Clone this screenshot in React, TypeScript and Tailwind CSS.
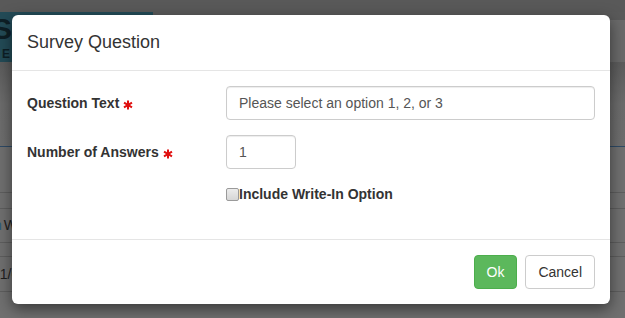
const RequiredMark = () => (
  <svg width="10" height="10" viewBox="0 0 10 10" className="ml-[4px] mt-[4px] shrink-0">
    <g stroke="#e01010" strokeWidth="2" strokeLinecap="butt">
      <line x1="5" y1="0.5" x2="5" y2="9.5" />
      <line x1="1" y1="2.7" x2="9" y2="7.3" />
      <line x1="1" y1="7.3" x2="9" y2="2.7" />
    </g>
  </svg>
);

const inputClass =
  'h-[34px] rounded-[4px] border border-[#cccccc] bg-white px-[12px] text-[14px] text-[#555555] shadow-[inset_0_1px_1px_rgba(0,0,0,0.075)] outline-none';

const App = () => {
  return (
    <div className="relative h-[318px] w-[625px] overflow-hidden bg-[#707070] font-['Liberation_Sans',Arial,sans-serif]">
      {/* page behind the dialog */}
      <div className="flex flex-col">
        <div className="h-[12px] bg-[#595959]" />
        <div className="flex h-[50px]">
          <div className="flex w-[153px] flex-col bg-[#234b57] pl-[0px] text-[#0e1f26]">
            <span className="ml-[-8px] mt-[2px] text-[30px] font-black leading-none">S</span>
            <span className="ml-[2px] mt-[4px] text-[12px] font-bold leading-none">E</span>
          </div>
          <div className="flex flex-1 flex-col">
            <div className="h-[8px] bg-[#5a5a5a]" />
            <div className="flex-1 bg-[#6a6a6a]" />
          </div>
        </div>
        <div className="h-[84px] bg-gradient-to-b from-[#5c5c5c] via-[#6c6c6c] to-[#6e6e6e]" />
        <div className="h-px bg-[#2e4a66]" />
        <div className="h-[46px] border-b border-[#5e5e5e]" />
        <div className="h-[16px] border-b border-[#5e5e5e]" />
        <div className="flex h-[34px] items-center border-b border-[#5e5e5e] text-[14px] text-[#1f1f1f]">
          <span className="ml-[-6px] text-[#2a5a80]">n</span>
          <span className="ml-[2px]">Wednesday</span>
        </div>
        <div className="h-[14px] border-b border-[#5e5e5e]" />
        <div className="flex h-[35px] items-center border-b border-[#5e5e5e] text-[14px] text-[#1f1f1f]">
          <span className="ml-[-8px]">01/01/2018</span>
        </div>
      </div>

      {/* dialog */}
      <div className="absolute inset-0 pl-[12px] pt-[15px]">
        <div className="w-[598px] rounded-[6px] bg-white shadow-[0_5px_15px_rgba(0,0,0,0.5)]">
          <div className="border-b border-[#e5e5e5] p-[15px]">
            <h4 className="text-[18px] leading-[25px] text-[#333333]">Survey Question</h4>
          </div>

          <div className="px-[15px] pb-[35px] pt-[15px] text-[14px] text-[#333333]">
            <div className="mb-[15px] flex items-center">
              <label className="flex w-[199px] items-center font-bold">
                Question Text <RequiredMark />
              </label>
              <input
                type="text"
                readOnly
                value="Please select an option 1, 2, or 3"
                className={`${inputClass} w-[369px]`}
              />
            </div>
            <div className="mb-[15px] flex items-center">
              <label className="flex w-[199px] items-center font-bold">
                Number of Answers <RequiredMark />
              </label>
              <input type="text" readOnly value="1" className={`${inputClass} w-[70px]`} />
            </div>
            <div className="flex items-center pl-[199px] leading-[20px]">
              <span className="h-[13px] w-[13px] rounded-[2px] border border-[#9a9a9a] bg-gradient-to-b from-[#ececec] to-[#d6d6d6]" />
              <span className="font-bold">Include Write-In Option</span>
            </div>
          </div>

          <div className="flex justify-end gap-[8px] border-t border-[#e5e5e5] p-[15px]">
            <button className="h-[34px] rounded-[4px] border border-[#4cae4c] bg-[#5cb85c] px-[12px] text-[14px] text-white">
              Ok
            </button>
            <button className="h-[34px] rounded-[4px] border border-[#cccccc] bg-white px-[12px] text-[14px] text-[#333333]">
              Cancel
            </button>
          </div>
        </div>
      </div>
    </div>
  );
};

export default App;
